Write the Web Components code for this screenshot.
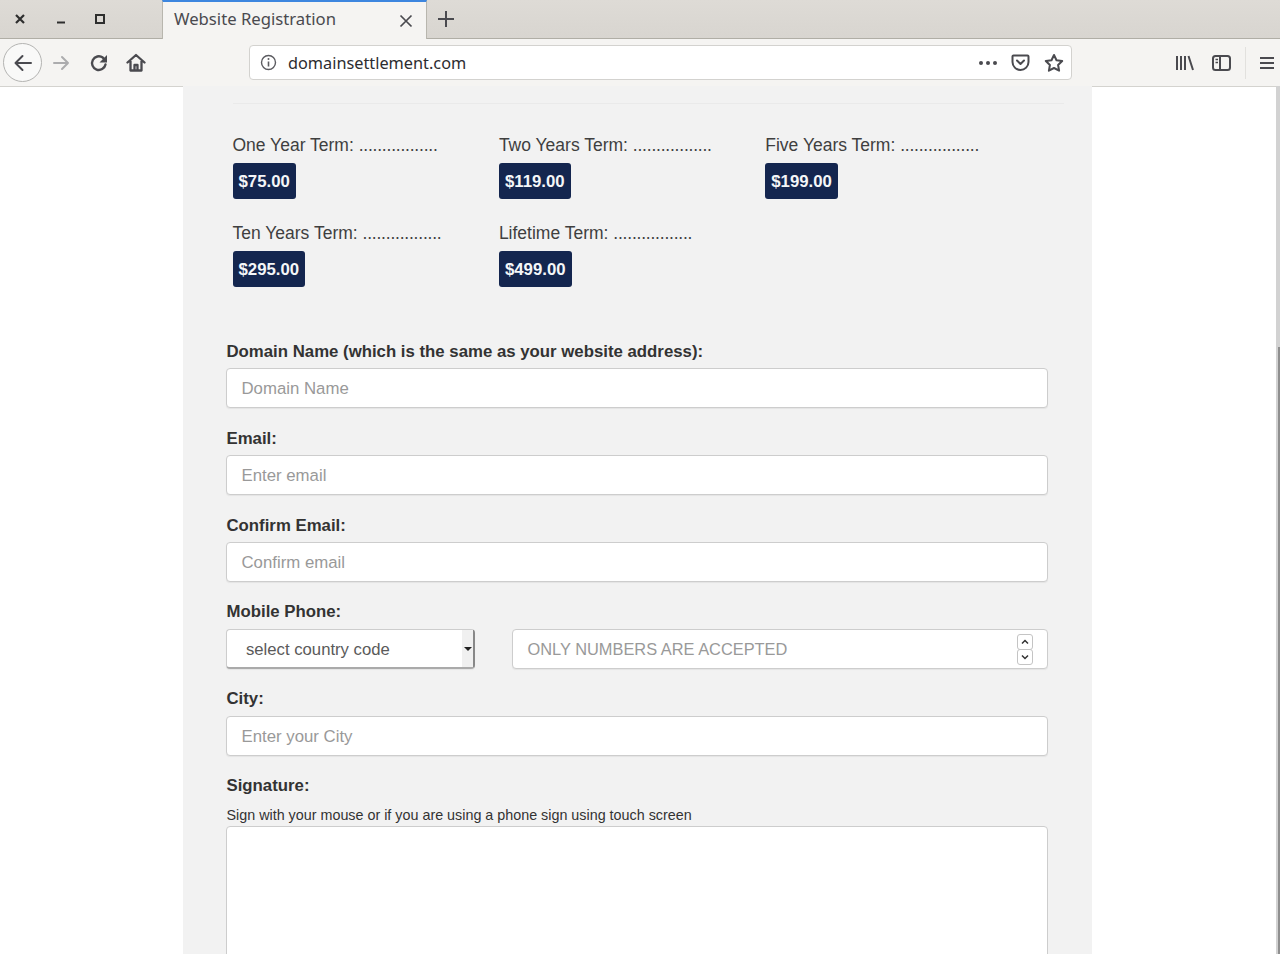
<!DOCTYPE html>
<html>
<head>
<meta charset="utf-8">
<title>Website Registration</title>
<style>
  html, body { margin: 0; height: 954px; overflow: hidden; background: #fff; }
  body { font-family: "Liberation Sans", Arial, sans-serif; display: flex; flex-direction: column; }
  reg-page { flex: 1; min-height: 0; }
</style>
</head>
<body>
<browser-chrome title="Website Registration" url="domainsettlement.com"></browser-chrome>
<reg-page>
  <price-item label="One Year Term:" price="$75.00"></price-item>
  <price-item label="Two Years Term:" price="$119.00"></price-item>
  <price-item label="Five Years Term:" price="$199.00"></price-item>
  <price-item label="Ten Years Term:" price="$295.00"></price-item>
  <price-item label="Lifetime Term:" price="$499.00"></price-item>
  <form-field slot="form" label="Domain Name (which is the same as your website address):" placeholder="Domain Name"></form-field>
  <form-field slot="form" label="Email:" placeholder="Enter email"></form-field>
  <form-field slot="form" label="Confirm Email:" placeholder="Confirm email"></form-field>
  <phone-field slot="form"></phone-field>
  <form-field slot="form" class="tight" label="City:" placeholder="Enter your City"></form-field>
  <signature-field slot="form"></signature-field>
</reg-page>

<script>
const ICON = 'fill="none" stroke="#4a4a4f" stroke-width="2" stroke-linecap="round" stroke-linejoin="round"';

class BrowserChrome extends HTMLElement {
  connectedCallback() {
    this.attachShadow({ mode: "open" }).innerHTML = `
      <style>
        :host { display: block; height: 86px; font-family: "Noto Sans", sans-serif; flex: none; }
        svg { display: block; flex: none; }
        .tabs { height: 38px; display: flex; align-items: stretch; background: linear-gradient(#dedbd6, #d8d5d0); border-bottom: 1px solid #b0aea6; }
        .win { width: 162px; display: flex; align-items: center; padding-left: 14px; box-sizing: border-box; gap: 26px; }
        .tab { width: 265px; height: 39px; box-sizing: border-box; background: #f5f4f2; border-top: 2px solid #3d86df; border-left: 1px solid #b8b6ae; border-right: 1px solid #b8b6ae; display: flex; align-items: center; padding: 0 13px 4px 11px; font-size: 16.7px; color: #4a4a4f; }
        .tab svg { margin-top: 4px; }
        .tab span { flex: 1; }
        .plus { margin: 0 0 0 10px; align-self: center; }
        .nav { height: 47px; background: #f5f4f2; border-bottom: 1px solid #d4d3cf; display: flex; align-items: center; }
        .back { width: 39px; height: 39px; margin-left: 3px; border: 1px solid #b4b4b2; border-radius: 50%; box-sizing: border-box; display: flex; align-items: center; justify-content: center; background: #f9f9f8; }
        .ctl { display: flex; align-items: center; margin-left: 10px; gap: 18px; }
        .ctl .reload { margin-left: 1px; }
        .url { width: 823px; height: 35px; margin-left: 103px; box-sizing: border-box; background: #fff; border: 1px solid #d3d2cf; border-radius: 4px; display: flex; align-items: center; padding: 0 7px 0 10px; font-size: 16.3px; color: #2c2c30; }
        .url b { font-weight: 400; flex: 1; margin-left: 11px; }
        .right { display: flex; align-items: center; margin-left: 103px; }
        .sep { width: 1px; height: 32px; background: #e2e1de; margin: 0 13px 0 14px; }
      </style>
      <div class="tabs">
        <div class="win">
          <svg width="12" height="12" viewBox="0 0 12 12"><path d="M2 2l8 8M10 2l-8 8" stroke="#2e2e2e" stroke-width="2.2"/></svg>
          <svg width="13" height="12" viewBox="0 0 13 12" style="margin-left:3px"><path d="M2 9.500h8" stroke="#2e2e2e" stroke-width="2"/></svg>
          <svg width="12" height="12" viewBox="0 0 12 12"><rect x="2" y="2" width="8" height="8" fill="none" stroke="#2e2e2e" stroke-width="2"/></svg>
        </div>
        <div class="tab"><span>${this.getAttribute("title")}</span>
          <svg width="14" height="14" viewBox="0 0 14 14"><path d="M1.500 1.500l11 11M12.500 1.500l-11 11" stroke="#4a4a4f" stroke-width="1.700"/></svg>
        </div>
        <svg class="plus" width="18" height="18" viewBox="0 0 18 18"><path d="M9 1v16M1 9h16" stroke="#4a4a4f" stroke-width="2"/></svg>
      </div>
      <div class="nav">
        <div class="back"><svg width="20" height="18" viewBox="0 0 20 18"><path d="M18 9H3M9.500 2L2.500 9l7 7" ${ICON}/></svg></div>
        <div class="ctl">
          <svg width="19" height="16" viewBox="0 0 19 16"><path d="M17 8H3M9 2L3 8l6 6" transform="matrix(-1 0 0 1 19 0)" fill="none" stroke="#acacae" stroke-width="2" stroke-linecap="round" stroke-linejoin="round"/></svg>
          <svg class="reload" width="18" height="18" viewBox="0 0 18 18"><path d="M15.500 10.500A6.800 6.800 0 1 1 12.800 3.600L15 5.800" fill="none" stroke="#4a4a4f" stroke-width="2.400" stroke-linecap="round"/><path d="M17 1v7.500H9.500z" fill="#4a4a4f"/></svg>
          <svg width="20" height="19" viewBox="0 0 20 19"><path d="M1.500 9.500L10 2l8.500 7.500M4.500 8v9.500h11V8M8.500 17.500v-5.500h3v5.500" fill="none" stroke="#4a4a4f" stroke-width="2.300" stroke-linecap="round" stroke-linejoin="round"/></svg>
        </div>
        <div class="url">
          <svg width="17" height="17" viewBox="0 0 17 17"><circle cx="8.500" cy="8.500" r="7" fill="none" stroke="#5b5b60" stroke-width="1.400"/><path d="M8.500 7.500v5" stroke="#5b5b60" stroke-width="1.600"/><circle cx="8.500" cy="5" r="1" fill="#5b5b60"/></svg>
          <b>${this.getAttribute("url")}</b>
          <svg width="20" height="6" viewBox="0 0 20 6" style="margin-right:13px"><circle cx="3" cy="3" r="2" fill="#4a4a4f"/><circle cx="10" cy="3" r="2" fill="#4a4a4f"/><circle cx="17" cy="3" r="2" fill="#4a4a4f"/></svg>
          <svg width="19" height="17" viewBox="0 0 19 17" style="margin-right:14px"><path d="M2.500 1.500h14a1 1 0 0 1 1 1V8a8 8 0 0 1-16 0V2.500a1 1 0 0 1 1-1z" ${ICON}/><path d="M6 6.500l3.500 3.500L13 6.500" ${ICON}/></svg>
          <svg width="20" height="19" viewBox="0 0 20 19"><path d="M10 2l2.500 5.200 5.700.800-4.100 4 1 5.700L10 15l-5.100 2.700 1-5.700-4.100-4 5.700-.8z" ${ICON}/></svg>
        </div>
        <div class="right">
          <svg width="19" height="16" viewBox="0 0 19 16"><path d="M2 1v14M6 1v14M10 1v14M13.500 1l4.500 14" fill="none" stroke="#4a4a4f" stroke-width="2"/></svg>
          <svg width="19" height="16" viewBox="0 0 19 16" style="margin-left:18px"><rect x="1" y="1" width="17" height="14" rx="2.500" fill="none" stroke="#4a4a4f" stroke-width="2"/><path d="M8 1v14" stroke="#4a4a4f" stroke-width="2"/><path d="M3.500 4.500h2.500M3.500 7.500h2.500" stroke="#4a4a4f" stroke-width="1.500"/></svg>
          <div class="sep"></div>
          <svg width="16" height="14" viewBox="0 0 16 14"><path d="M1 2h14M1 7h14M1 12h14" stroke="#4a4a4f" stroke-width="2"/></svg>
        </div>
      </div>`;
  }
}

class RegPage extends HTMLElement {
  connectedCallback() {
    this.attachShadow({ mode: "open" }).innerHTML = `
      <style>
        :host { display: block; position: relative; overflow: hidden; }
        .panel { width: 909px; height: 100%; margin-left: 183px; background: #f2f2f2; box-sizing: border-box; padding: 17px 43.5px 0 43.5px; }
        hr { margin: 0 -15px 0 6px; border: 0; border-top: 1px solid #eaeaea; }
        .prices { display: grid; grid-template-columns: repeat(3, 266.4px); row-gap: 21px; margin: 28px 0 0 6px; }
        .form { margin: 54px 0 0 -0.5px; width: 822px; display: flex; flex-direction: column; gap: 20px; }
        .bar { position: absolute; right: 0; top: 0; bottom: 0; width: 4px; background: #d2d2d2; }
        .bar i { position: absolute; left: 2px; right: 0; top: 261px; bottom: 0; background: #8f8f8f; }
      </style>
      <div class="panel">
        <hr>
        <div class="prices"><slot></slot></div>
        <div class="form"><slot name="form"></slot></div>
      </div>
      <div class="bar"><i></i></div>`;
  }
}

class PriceItem extends HTMLElement {
  connectedCallback() {
    this.attachShadow({ mode: "open" }).innerHTML = `
      <style>
        :host { display: block; color: #3f3f3f; }
        p { margin: 0; font-size: 17.5px; line-height: 26px; height: 26px; white-space: nowrap; }
        p i { font-style: normal; letter-spacing: -0.22px; }
        span { display: inline-block; margin-top: 5px; background: #14264f; color: #f4f6f8; font-weight: 700; font-size: 16.8px; line-height: 20px; padding: 9px 6px 7px; border-radius: 3px; height: 20px; }
      </style>
      <p>${this.getAttribute("label")} <i>.................</i></p>
      <span>${this.getAttribute("price")}</span>`;
  }
}

const fieldCss = `
  label { display: block; font-weight: 700; font-size: 16.8px; color: #333; line-height: 22px; height: 22px; margin-bottom: 5px; padding-left: 0.5px; white-space: nowrap; }
  :host(.tight) label { margin-top: -1px; margin-bottom: 6px; }
  .box { height: 40px; box-sizing: border-box; background: #fff; border: 1px solid #cdcdcd; border-radius: 4px; box-shadow: 0 1px 1px #e4e4e4; padding: 0 14.5px; font-size: 16.8px; line-height: 39px; color: #999; white-space: nowrap; }
`;

class FormField extends HTMLElement {
  connectedCallback() {
    this.attachShadow({ mode: "open" }).innerHTML = `
      <style>:host { display: block; } ${fieldCss}</style>
      <label>${this.getAttribute("label")}</label>
      <div class="box">${this.getAttribute("placeholder")}</div>`;
  }
}

class PhoneField extends HTMLElement {
  connectedCallback() {
    this.classList.add("tight");
    this.attachShadow({ mode: "open" }).innerHTML = `
      <style>
        :host { display: block; }
        ${fieldCss}
        .row { display: flex; justify-content: space-between; }
        .sel { width: 249px; position: relative; color: #5a5a5a; padding-left: 19px; font-size: 16.7px; border-right: 2px solid #888; border-bottom: 2px solid #aaa; }
        .arrow { position: absolute; right: 0; top: 0; bottom: 0; width: 11px; background: #f0f0f0; display: flex; align-items: center; justify-content: center; }
        .arrow::after { content: ""; border: 4px solid transparent; border-top-color: #222; border-bottom: 0; }
        .num { width: 536px; display: flex; align-items: center; justify-content: space-between; padding-right: 14px; font-size: 16.4px; }
        .spin { display: flex; flex-direction: column; }
        .spin svg { display: block; border: 1px solid #c4c4c4; border-radius: 3px; background: #fff; margin-bottom: -1px; }
      </style>
      <label>Mobile Phone:</label>
      <div class="row">
        <div class="box sel">select country code<span class="arrow"></span></div>
        <div class="box num"><span>ONLY NUMBERS ARE ACCEPTED</span>
          <span class="spin">
            <svg width="14" height="14" viewBox="0 0 14 14"><path d="M4 8.500l3-3 3 3" fill="none" stroke="#333" stroke-width="1.500"/></svg>
            <svg width="14" height="14" viewBox="0 0 14 14"><path d="M4 5.500l3 3 3-3" fill="none" stroke="#333" stroke-width="1.500"/></svg>
          </span>
        </div>
      </div>`;
  }
}

class SignatureField extends HTMLElement {
  connectedCallback() {
    this.attachShadow({ mode: "open" }).innerHTML = `
      <style>
        :host { display: block; margin-top: -1px; }
        ${fieldCss}
        label { margin-bottom: 8px; }
        small { display: block; font-size: 14.33px; line-height: 20px; color: #333; margin: 0 0 1px; padding-left: 0.5px; white-space: nowrap; }
        .pad { height: 240px; background: #fff; border: 1px solid #cdcdcd; border-radius: 4px; box-sizing: border-box; }
      </style>
      <label>Signature:</label>
      <small>Sign with your mouse or if you are using a phone sign using touch screen</small>
      <div class="pad"></div>`;
  }
}

customElements.define("browser-chrome", BrowserChrome);
customElements.define("reg-page", RegPage);
customElements.define("price-item", PriceItem);
customElements.define("form-field", FormField);
customElements.define("phone-field", PhoneField);
customElements.define("signature-field", SignatureField);
</script>
</body>
</html>
